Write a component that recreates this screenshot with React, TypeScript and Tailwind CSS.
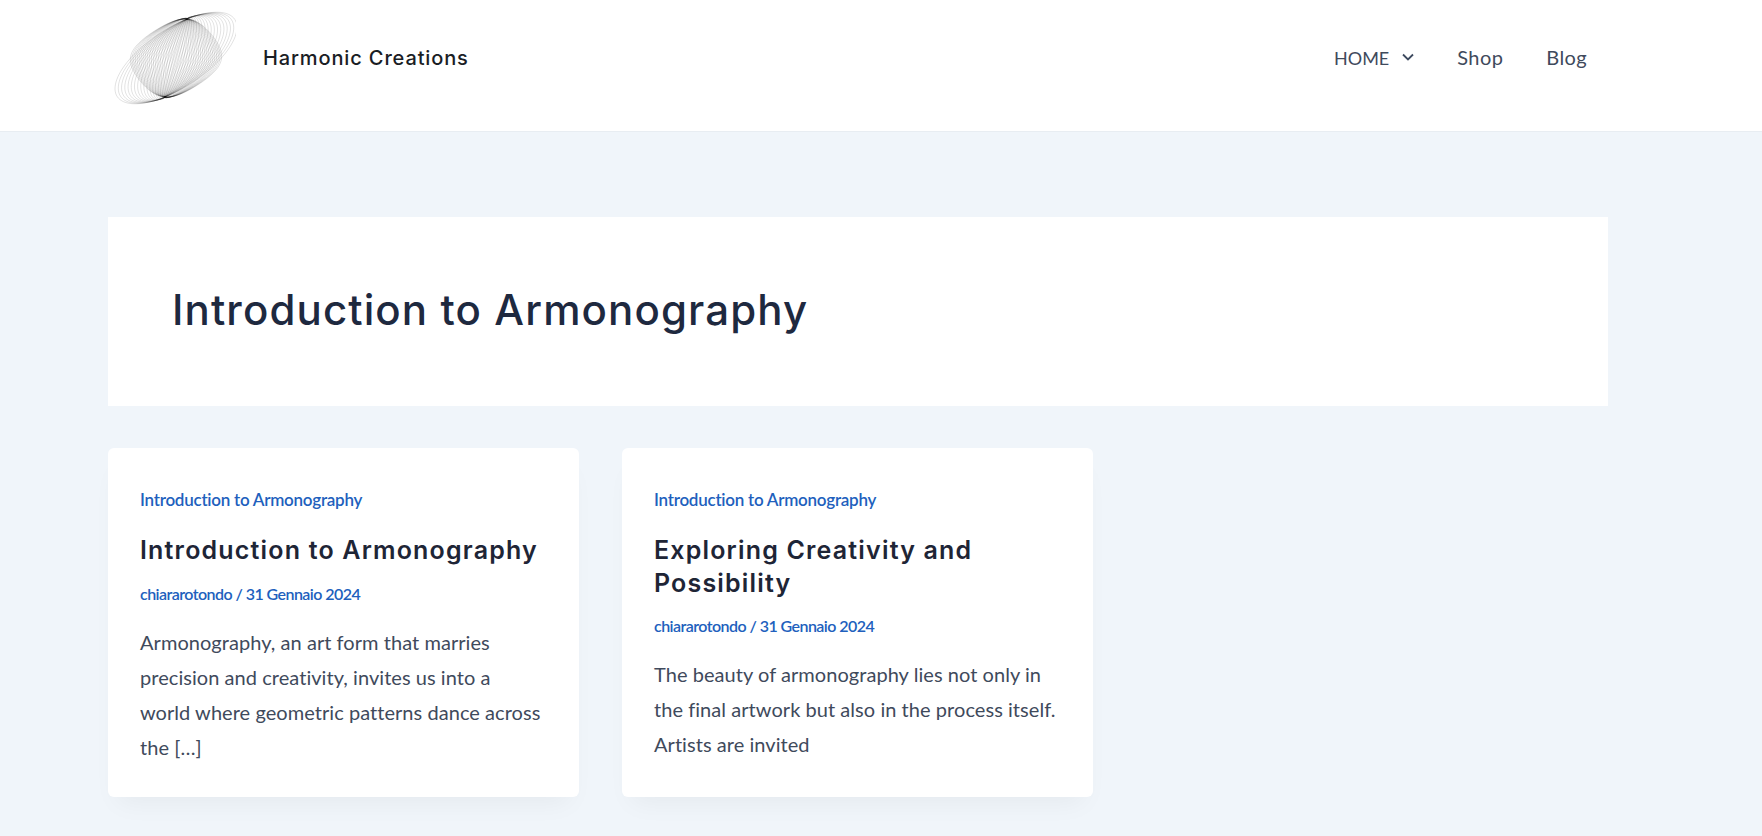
import React from "react";

const sans = "font-['Lato','Noto_Sans',sans-serif]";
const head = "font-['Inter','Liberation_Sans',sans-serif]";

function Logo() {
  const P = [11, -39];
  const c = [176, 58];
  const Q1 = [60, -24];
  const Q2 = [-45, -3];
  const n = 40;
  const paths: string[] = [];
  for (let i = 0; i < n; i++) {
    const s = i / (n - 1);
    const f = 0.6 * s + 0.4 * Math.sin((s * Math.PI) / 2);
    const q = [Q1[0] + (Q2[0] - Q1[0]) * f, Q1[1] + (Q2[1] - Q1[1]) * f];
    const e = 0.05 * f;
    let d = "";
    for (let k = 0; k <= 96; k++) {
      const t = (k / 96) * Math.PI * 2;
      const u = (Math.cos(t) + e * Math.cos(3 * t)) / (1 + e);
      const v = (Math.sin(t) - e * Math.sin(3 * t)) / (1 + e);
      const x = c[0] - 108 + P[0] * u + q[0] * v;
      const y = c[1] - 8 + P[1] * u + q[1] * v;
      d += (k === 0 ? "M" : "L") + x.toFixed(2) + " " + y.toFixed(2);
    }
    paths.push(d);
  }
  return (
    <svg width="128" height="100" viewBox="0 0 128 100" className="shrink-0 blur-[0.6px]">
      {paths.map((d, i) => (
        <path key={i} d={d} fill="none" stroke="#000" strokeOpacity="0.2" strokeWidth="0.6" />
      ))}
    </svg>
  );
}

function Card({ title, lines }: { title: string[]; lines: string[] }) {
  return (
    <article className="h-[349px] w-[471px] rounded-md bg-white p-8 shadow-[0_15px_25px_-10px_rgba(0,0,0,0.05)]">
      <p className={`${sans} mt-[8px] text-[17px] leading-[24px] font-semibold tracking-[-0.25px] text-[#215fbd]`}>Introduction to Armonography</p>
      <h2 className={`${head} mt-[22px] text-[25px] leading-[32.5px] font-semibold tracking-[1.18px] text-[#1e2536]`}>
        {title.map((t) => (
          <span key={t} className="block">{t}</span>
        ))}
      </h2>
      <p className={`${sans} mt-[15px] text-[16px] leading-[24px] font-semibold tracking-[-0.55px] text-[#215fbd]`}>chiararotondo / 31 Gennaio 2024</p>
      <div className={`${sans} mt-[19px] text-[20px] leading-[35px] tracking-[0.05px] text-[#3f4a5c]`}>
        {lines.map((l) => (
          <p key={l} className="whitespace-nowrap">{l}</p>
        ))}
      </div>
    </article>
  );
}

export default function App() {
  return (
    <div className="h-[836px] w-full overflow-hidden bg-[#f0f5fa]">
      <header className="h-[132px] border-b border-[#e8edf2] bg-white pl-[108px]">
        <div className="flex h-[116px] w-[1500px] items-center pr-[21px]">
          <Logo />
          <span className={`${head} ml-[27px] text-[20px] font-medium tracking-[0.87px] text-[#1a1d24]`}>Harmonic Creations</span>
          <nav className={`${sans} ml-auto flex -translate-y-px items-center text-[20px] tracking-[0.4px] text-[#3f4a5c]`}>
            <span className="translate-y-px text-[18px] tracking-normal">HOME</span>
            <svg width="12" height="8" viewBox="0 0 12 8" fill="none" stroke="#3d4a5f" strokeWidth="1.8" className="ml-[13px]"><path d="M1 1.5l5 5 5-5" /></svg>
            <span className="ml-[43px]">Shop</span>
            <span className="ml-[43px]">Blog</span>
          </nav>
        </div>
      </header>
      <main className="ml-[108px] w-[1500px] pt-[85px]">
        <section className="flex h-[189px] items-center bg-white pb-[4px] pl-[64px]">
          <h1 className={`${head} text-[42px] font-medium tracking-[1.12px] text-[#1e293f]`}>Introduction to Armonography</h1>
        </section>
        <div className="mt-[42px] flex gap-[43px]">
          <Card title={["Introduction to Armonography"]} lines={["Armonography, an art form that marries", "precision and creativity, invites us into a", "world where geometric patterns dance across", "the […]"]} />
          <Card title={["Exploring Creativity and", "Possibility"]} lines={["The beauty of armonography lies not only in", "the final artwork but also in the process itself.", "Artists are invited"]} />
        </div>
      </main>
    </div>
  );
}
